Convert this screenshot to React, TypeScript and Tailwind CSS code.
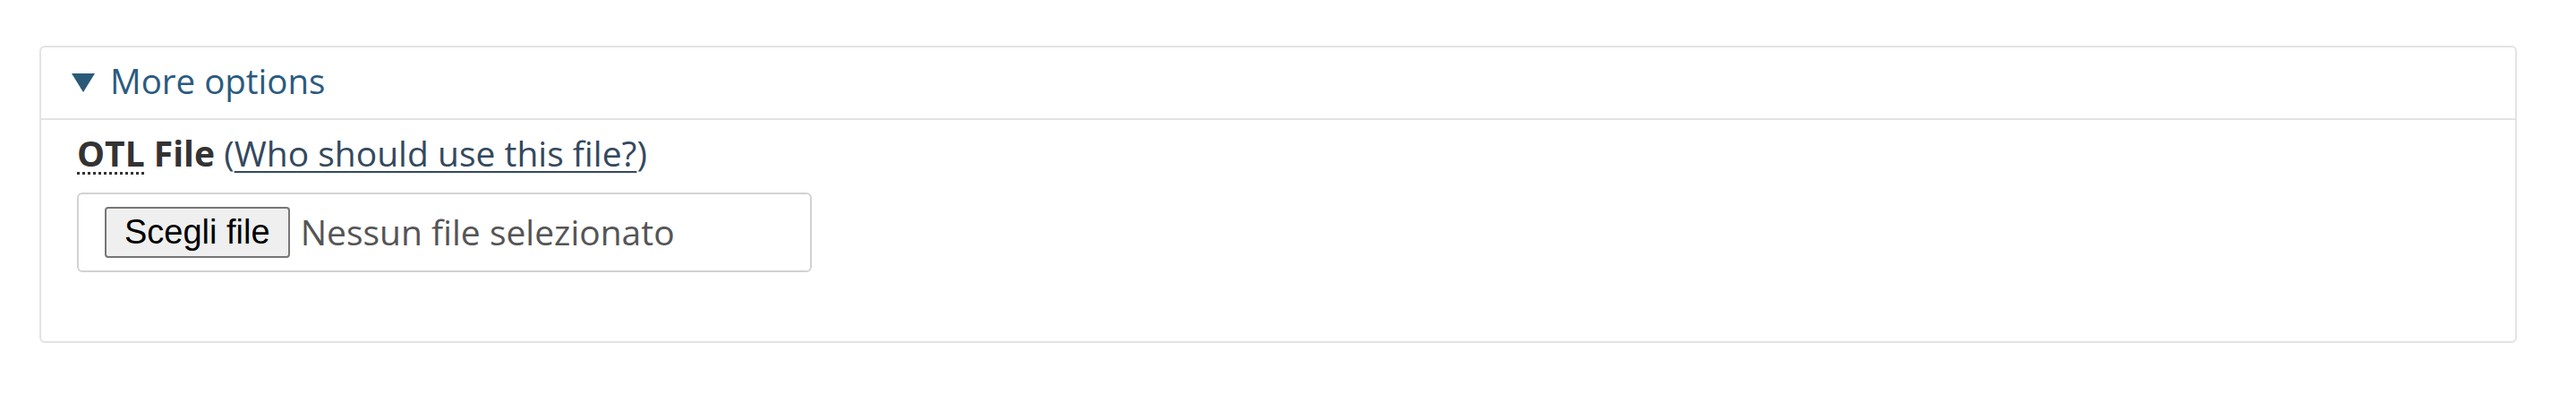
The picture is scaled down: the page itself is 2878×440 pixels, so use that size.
const App = () => {
  return (
    <div className="min-h-[440px] w-full bg-white pl-[44px] pt-[51px]" style={{ fontFamily: '"Open Sans", sans-serif' }}>
      <div className="w-[2768px] rounded-[6px] border-2 border-[#e3e3e3]">
        {/* summary */}
        <div className="flex items-center border-b-2 border-[#e3e3e3] pl-[34px] pt-[11px] pb-[16px] text-[38.5px] leading-[52px] text-[#2b5b80]">
          <svg width="26" height="21" viewBox="0 0 26 21" className="mr-[17px] mt-[4px]">
            <polygon points="0,0 26,0 13,21" fill="#2b5a78" />
          </svg>
          <span>More options</span>
        </div>

        {/* body */}
        <div className="pl-[40px] pt-[11px] pb-[77px]">
          <div className="text-[39px] leading-[52px] text-[#333333]">
            <span className="font-bold">
              <abbr
                title="OTL"
                className="no-underline"
                style={{ textDecoration: 'underline dotted', textDecorationThickness: '3px', textUnderlineOffset: '6px' }}
              >
                OTL
              </abbr>{' '}
              File
            </span>{' '}
            <span className="text-[#34495e]">
              (
              <a href="#" className="underline decoration-2 underline-offset-[5px]">
                Who should use this file?
              </a>
              )
            </span>
          </div>

          <div className="mt-[18px] flex h-[89px] w-[821px] items-center rounded-[6px] border-2 border-[#d2d2d2] pl-[29px]">
            <button
              type="button"
              className="flex h-[57px] items-center rounded-[4px] border-2 border-[#767676] bg-[#efefef] px-[20px] text-[38px] text-black"
              style={{ fontFamily: '"Liberation Sans", Arial, sans-serif' }}
            >
              Scegli file
            </button>
            <span className="ml-[12px] text-[39px] text-[#555555]">Nessun file selezionato</span>
          </div>
        </div>
      </div>
    </div>
  )
}

export default App
